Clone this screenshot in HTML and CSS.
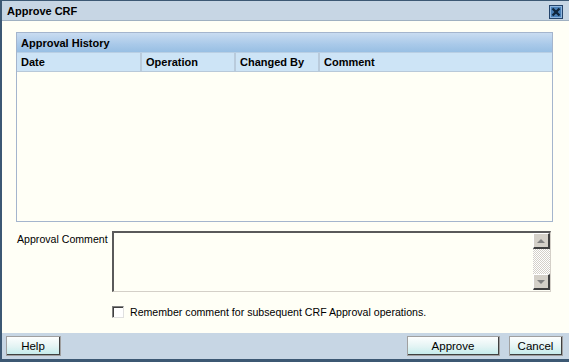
FILE: index.html
```html
<!DOCTYPE html>
<html lang="en">

<head>
    <meta charset="UTF-8">
    <meta name="viewport" content="width=device-width, initial-scale=1.0">
    <title>Approve CRF</title>
    <link rel="stylesheet" href="styles.css">
</head>

<body>
    <div class="dialog">
        <div class="titlebar">
            <span class="title">Approve CRF</span>
            <span class="close-btn">
                <svg width="14" height="14" viewBox="0 0 14 14">
                    <rect x="0.5" y="0.5" width="13" height="13" fill="#4a80b8" stroke="#24446b"/>
                    <rect x="1.5" y="1.5" width="11" height="11" fill="none" stroke="#8fb6de"/>
                    <path d="M3.5 3.5 L10.5 10.5 M10.5 3.5 L3.5 10.5" stroke="#10273f" stroke-width="2.4"/>
                    <rect x="5.5" y="5.5" width="3" height="3" fill="#10273f"/>
                </svg>
            </span>
        </div>

        <div class="content">
            <div class="grid">
                <div class="grid-title">Approval History</div>
                <div class="grid-head">
                    <div class="col col-date">Date</div>
                    <div class="col col-op">Operation</div>
                    <div class="col col-by">Changed By</div>
                    <div class="col col-comment">Comment</div>
                </div>
                <div class="grid-body"></div>
            </div>

            <div class="comment-row">
                <label class="comment-label">Approval Comment</label>
                <div class="textbox">
                    <div class="text-area"></div>
                    <div class="scrollbar">
                        <span class="sb-btn"><span class="arrow-up"></span></span>
                        <span class="sb-track"></span>
                        <span class="sb-btn"><span class="arrow-down"></span></span>
                    </div>
                </div>
            </div>

            <div class="remember">
                <span class="checkbox"></span>
                <span>Remember comment for subsequent CRF Approval operations.</span>
            </div>
        </div>

        <div class="footer">
            <button class="btn btn-help">Help</button>
            <div class="footer-right">
                <button class="btn btn-approve">Approve</button>
                <button class="btn btn-cancel">Cancel</button>
            </div>
        </div>
    </div>
</body>

</html>
```

FILE: styles.css
```css
* {
    margin: 0;
    padding: 0;
    box-sizing: border-box;
    font-family: "Liberation Sans", Arial, sans-serif;
}

body {
    width: 569px;
    height: 362px;
    overflow: hidden;
    font-size: 10.6px;
    color: #000;
}

.dialog {
    width: 569px;
    height: 362px;
    display: flex;
    flex-direction: column;
    border-top: 1px solid #3c5873;
    border-left: 2px solid #3c5873;
    border-bottom: 3px solid #3c5873;
}

.titlebar {
    height: 20px;
    flex-shrink: 0;
    background-color: #c7d6e4;
    border-bottom: 1px solid #9fb0c1;
    display: flex;
    justify-content: space-between;
    align-items: center;
    padding: 0 6px 0 5px;
}

.title {
    font-weight: bold;
    font-size: 11px;
}

.close-btn {
    display: flex;
    margin-top: 2px;
}

.content {
    flex: 1;
    background-color: #fffff6;
    padding: 11px 16px 0 14px;
}

.grid {
    width: 537px;
    height: 190px;
    border: 1px solid #a4b5cd;
    display: flex;
    flex-direction: column;
}

.grid-title {
    height: 20px;
    padding-left: 4px;
    line-height: 20px;
    font-size: 11px;
    font-weight: bold;
    background: linear-gradient(#c9dcf1, #a9c9e9 60%, #98bfe3);
    border-bottom: 1px solid #b9cfe4;
}

.grid-head {
    height: 19px;
    display: flex;
    background-color: #cde4f6;
    border-bottom: 1px solid #b8c9d9;
    font-size: 11px;
    font-weight: bold;
}

.col {
    line-height: 18px;
    padding-left: 4px;
    border-right: 2px solid #b9cbdc;
}

.col-date { width: 125px; }
.col-op { width: 94px; }
.col-by { width: 84px; }
.col-comment { flex: 1; border-right: none; }

.grid-body {
    flex: 1;
}

.comment-row {
    display: flex;
    margin-top: 9px;
}

.comment-label {
    width: 96px;
    padding: 2px 0 0 1px;
}

.textbox {
    width: 439px;
    height: 61px;
    display: flex;
    border-top: 2px solid #5a5a5a;
    border-left: 2px solid #5a5a5a;
    border-bottom: 1px solid #d4d0c8;
    border-right: 1px solid #d4d0c8;
}

.text-area {
    flex: 1;
}

.scrollbar {
    width: 17px;
    display: flex;
    flex-direction: column;
    margin: 0 0 1px 0;
}

.sb-btn {
    height: 16px;
    background-color: #d4d0c8;
    border-top: 1px solid #ffffff;
    border-left: 1px solid #ffffff;
    border-right: 2px solid #404040;
    border-bottom: 2px solid #404040;
    display: flex;
    justify-content: center;
    align-items: center;
}

.sb-track {
    flex: 1;
    background-color: #eeeeee;
    background-image: repeating-conic-gradient(#ffffff 0 25%, #d4d0c8 0 50%);
    background-size: 2px 2px;
}

.arrow-up {
    border-left: 4px solid transparent;
    border-right: 4px solid transparent;
    border-bottom: 4px solid #808080;
}

.arrow-down {
    border-left: 4px solid transparent;
    border-right: 4px solid transparent;
    border-top: 4px solid #808080;
}

.remember {
    display: flex;
    align-items: center;
    gap: 6px;
    margin-top: 14px;
    padding-left: 96px;
}

.checkbox {
    width: 12px;
    height: 12px;
    background-color: #fff;
    border-top: 1px solid #808080;
    border-left: 1px solid #808080;
    border-right: 1px solid #e0e0e0;
    border-bottom: 1px solid #e0e0e0;
    box-shadow: inset 1px 1px 0 #404040;
}

.footer {
    height: 26px;
    flex-shrink: 0;
    background-color: #c7d6e4;
    display: flex;
    justify-content: space-between;
    align-items: center;
    padding: 0 6px 0 4px;
}

.footer-right {
    display: flex;
    gap: 9px;
}

.btn {
    height: 20px;
    font-size: 11.5px;
    background: linear-gradient(#fdfefe, #e4f4f4 55%, #c6ecec);
    border-top: 1px solid #ffffff;
    border-left: 1px solid #ffffff;
    border-right: 2px solid #404040;
    border-bottom: 2px solid #404040;
    outline: 1px solid #a0a0a0;
    outline-offset: -1px;
    cursor: pointer;
}

.btn-help { width: 55px; }
.btn-approve { width: 93px; }
.btn-cancel { width: 54px; }
```
